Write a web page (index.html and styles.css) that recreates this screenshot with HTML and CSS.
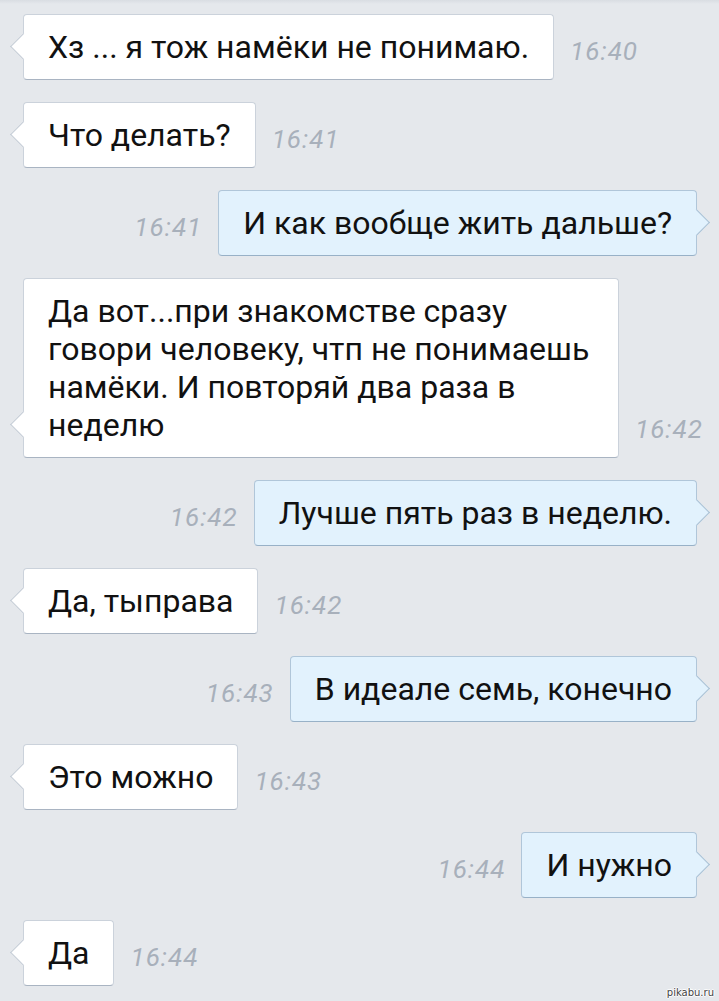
FILE: index.html
```html
<!DOCTYPE html>
<html lang="ru">
<head>
    <meta charset="UTF-8">
    <title>Чат</title>
    <link rel="stylesheet" href="styles.css">
</head>
<body>
    <div id="chat">
        <div class="row in">
            <div class="bubble">Хз ... я тож намёки не понимаю.</div>
            <span class="time">16:40</span>
        </div>
        <div class="row in">
            <div class="bubble">Что делать?</div>
            <span class="time">16:41</span>
        </div>
        <div class="row out">
            <span class="time">16:41</span>
            <div class="bubble">И как вообще жить дальше?</div>
        </div>
        <div class="row in">
            <div class="bubble wide">Да вот...при знакомстве сразу говори человеку, чтп не понимаешь намёки. И повторяй два раза в неделю</div>
            <span class="time">16:42</span>
        </div>
        <div class="row out">
            <span class="time">16:42</span>
            <div class="bubble">Лучше пять раз в неделю.</div>
        </div>
        <div class="row in">
            <div class="bubble">Да, тыправа</div>
            <span class="time">16:42</span>
        </div>
        <div class="row out">
            <span class="time">16:43</span>
            <div class="bubble">В идеале семь, конечно</div>
        </div>
        <div class="row in">
            <div class="bubble">Это можно</div>
            <span class="time">16:43</span>
        </div>
        <div class="row out">
            <span class="time">16:44</span>
            <div class="bubble">И нужно</div>
        </div>
        <div class="row in">
            <div class="bubble">Да</div>
            <span class="time">16:44</span>
        </div>
    </div>
    <div class="mark">pikabu.ru</div>
</body>
</html>
```

FILE: styles.css
```css
*{
    margin: 0;
    padding: 0;
    box-sizing: border-box;
}
body{
    width: 719px;
    height: 1001px;
    overflow: hidden;
    background: linear-gradient(#d9dde2, #e5e8ec 4px) #e5e8ec;
    font-family: Roboto, "Noto Sans", sans-serif;
    position: relative;
}
#chat{
    padding: 14px 22px 0 23px;
    display: flex;
    flex-direction: column;
    gap: 22px;
}
.row{
    display: flex;
    align-items: flex-end;
    gap: 16px;
}
.row.out{
    justify-content: flex-end;
}
.bubble{
    position: relative;
    padding: 13px 24px;
    font-size: 32px;
    line-height: 38px;
    color: #111;
    background-color: #fff;
    border: 1px solid #cbd2db;
    border-bottom-color: #a9b4c2;
    border-radius: 4px;
}
.bubble.wide{
    max-width: 596px;
    flex-shrink: 0;
}
/* tail */
.bubble::before{
    content: "";
    position: absolute;
    bottom: 23px;
    width: 18px;
    height: 18px;
    background-color: inherit;
    transform: rotate(45deg);
}
.in .bubble::before{
    left: -10px;
    border-left: 1px solid #c3cbd5;
    border-bottom: 1px solid #c3cbd5;
}
.out .bubble{
    background-color: #e2f2fd;
    border-color: #b0c6d9;
    border-bottom-color: #98b1c7;
}
.out .bubble::before{
    right: -10px;
    border-top: 1px solid #a9c0d4;
    border-right: 1px solid #a9c0d4;
}
.time{
    font-size: 26px;
    line-height: 24px;
    letter-spacing: 1px;
    font-style: italic;
    color: #a8b0bb;
    margin-bottom: 17px;
    flex-shrink: 0;
}
.mark{
    position: absolute;
    right: 5px;
    bottom: 3px;
    font-family: "DejaVu Sans", sans-serif;
    font-size: 10px;
    color: #444;
    text-shadow: 1px 0 #fff, -1px 0 #fff, 0 1px #fff, 0 -1px #fff;
}
```
